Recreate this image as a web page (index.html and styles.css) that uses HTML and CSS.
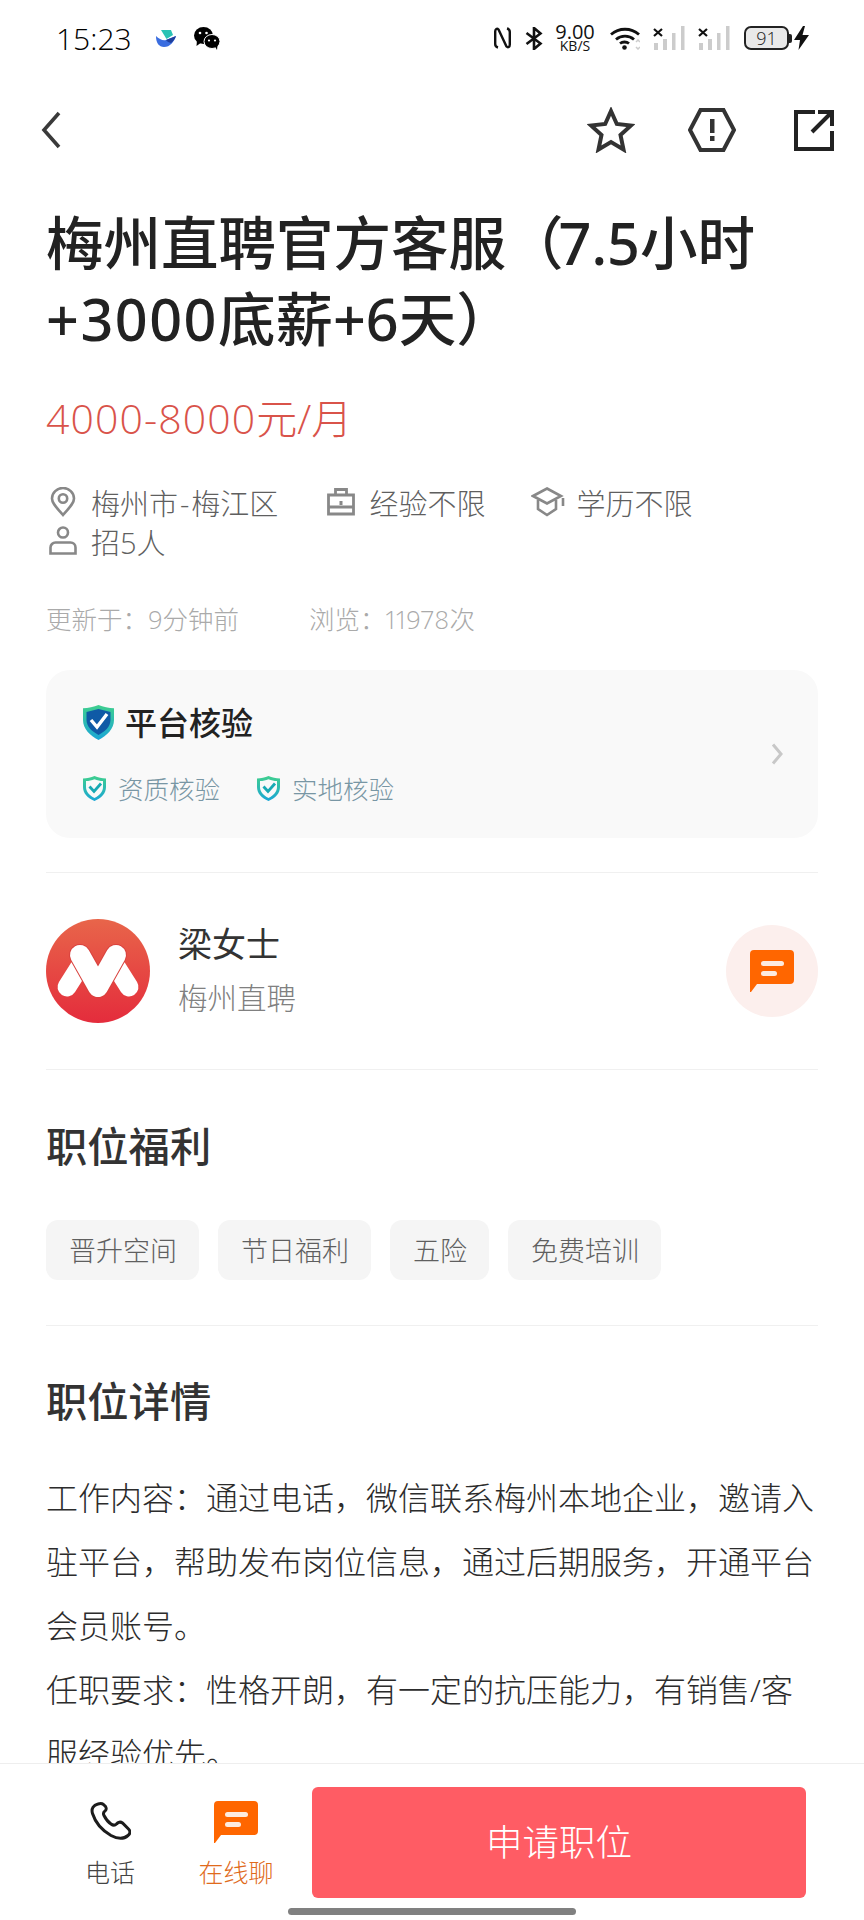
FILE: index.html
```html
<!DOCTYPE html>
<html lang="zh-CN">
  <head>
    <meta charset="UTF-8" />
    <meta name="viewport" content="width=device-width, initial-scale=1.0" />
    <title>职位详情</title>
    <link rel="stylesheet" href="styles.css">
  </head>
  <body>
    <svg class="sprite" aria-hidden="true">
      <defs>
        <linearGradient id="shield-edge" x1="0" y1="0" x2="0" y2="1">
          <stop offset="0" stop-color="#3fcf8e" />
          <stop offset="1" stop-color="#1aa6d6" />
        </linearGradient>
        <linearGradient id="avatar-bg" x1="0" y1="0" x2="0" y2="1">
          <stop offset="0" stop-color="#e8654a" />
          <stop offset="1" stop-color="#e42c3c" />
        </linearGradient>
        <symbol id="chat" viewBox="0 0 44 42">
          <path d="M4 0H40a4 4 0 0 1 4 4V30a4 4 0 0 1-4 4H7L1 42H0V4a4 4 0 0 1 4-4Z" fill="#ff6600" />
          <rect x="11" y="11" width="23" height="5" rx="2.500" fill="#fdebe0" />
          <rect x="11" y="21" width="16" height="5" rx="2.500" fill="#fdebe0" />
        </symbol>
        <symbol id="mini-shield" viewBox="0 0 23 25">
          <path d="M11.5 0C15 1.6 19 2.4 23 2.4V11c0 6.5-4.500 11-11.500 14C4.500 22 0 17.500 0 11V2.400C4 2.400 8 1.600 11.500 0Z" fill="url(#shield-edge)" />
          <path d="M11.500 3.200C14.200 4.300 17.200 5 20 5.100V11c0 4.800-3.200 8.300-8.500 10.900C6.200 19.300 3 15.800 3 11V5.100C5.800 5 8.800 4.300 11.500 3.200Z" fill="#f9f9f9" />
          <path d="M6.500 10.500 11 15.500 18 7.500" fill="none" stroke="#17a9b4" stroke-width="2.800" />
        </symbol>
      </defs>
    </svg>

    <div class="screen">
      <header class="status-bar">
        <span class="clock">15:23</span>
        <svg class="app-icon" viewBox="0 0 20 17">
          <path d="M5 0H15L17 5 10.500 9Z" fill="#2ac2b4" />
          <path d="M0 6C3 9 7 11 10 10L20 6C18 12 14 17 8 17 3 17 0 13 0 6Z" fill="#3a6de0" />
          <path d="M10 10 20 6C19 9 17 11.500 15 13 13 12.500 11 11.500 10 10Z" fill="#1f3f9c" />
        </svg>
        <svg class="wechat-icon" viewBox="0 0 26 23">
          <ellipse cx="9.500" cy="8.500" rx="9.500" ry="8.500" fill="#000" />
          <path d="M3 13 2.500 19 8 15Z" fill="#000" />
          <ellipse cx="18" cy="14.500" rx="8" ry="7" fill="#000" stroke="#fff" stroke-width="1" />
          <path d="M21 19.500 23 23 23.500 18Z" fill="#000" />
          <circle cx="6" cy="6" r="1.300" fill="#fff" />
          <circle cx="12.500" cy="6" r="1.300" fill="#fff" />
          <circle cx="15" cy="13.500" r="1.100" fill="#fff" />
          <circle cx="21" cy="13.500" r="1.100" fill="#fff" />
        </svg>
        <span class="status-spacer"></span>
        <svg class="nfc-icon" viewBox="0 0 17 22">
          <path d="M4 20.500C2 20 1.200 19 1.200 17V4.500C1.200 2 3 1 4.500 2.500L12.500 19.500C14 21 15.800 20 15.800 17.500V5C15.800 3 15 2 13 1.500" fill="none" stroke="#111" stroke-width="2.400" />
        </svg>
        <svg class="bt-icon" viewBox="0 0 18 23">
          <path d="M1.500 6 15.500 16.500 9 22V1L15.500 6.500 1.500 17" fill="none" stroke="#111" stroke-width="2.600" />
        </svg>
        <span class="net-speed"><b>9.00</b><i>KB/S</i></span>
        <svg class="wifi-icon" viewBox="0 0 30 23">
          <path d="M1 7.500C9 .5 21 .5 29 7.500" fill="none" stroke="#111" stroke-width="2.800" />
          <path d="M6 12.500C11 8 19 8 24 12.500" fill="none" stroke="#111" stroke-width="2.800" />
          <path d="M10 16.500C12.500 14.500 16.500 14.500 19 16.500" fill="none" stroke="#111" stroke-width="2.800" />
          <circle cx="14.500" cy="20.500" r="2.300" fill="#111" />
          <path d="M26 15 28 13 30 15M26 20 28 22 30 20" fill="none" stroke="#ccc" stroke-width="1.500" />
        </svg>
        <svg class="signal-icon" viewBox="0 0 32 24">
          <path d="M1 3 9 10M9 3 1 10" stroke="#111" stroke-width="2.200" />
          <rect x="1" y="17" width="4" height="7" fill="#ccc" />
          <rect x="10" y="13" width="4" height="11" fill="#ccc" />
          <rect x="19" y="7" width="3.500" height="17" fill="#ccc" />
          <rect x="28" y="0" width="3.500" height="24" fill="#ccc" />
        </svg>
        <svg class="signal-icon" viewBox="0 0 32 24">
          <path d="M1 3 9 10M9 3 1 10" stroke="#111" stroke-width="2.200" />
          <rect x="1" y="17" width="4" height="7" fill="#ccc" />
          <rect x="10" y="13" width="4" height="11" fill="#ccc" />
          <rect x="19" y="7" width="3.500" height="17" fill="#ccc" />
          <rect x="28" y="0" width="3.500" height="24" fill="#ccc" />
        </svg>
        <span class="battery"><span class="battery-body">91</span><span class="battery-nub"></span></span>
        <svg class="bolt-icon" viewBox="0 0 15 24">
          <path d="M9 0 0 14H6L4.500 24 15 9H8.500L11 0Z" fill="#111" />
        </svg>
      </header>

      <nav class="nav-bar">
        <svg class="nav-back" viewBox="0 0 20 38">
          <path d="M18 2 3 19 18 36" fill="none" stroke="#3a3a3a" stroke-width="3.600" />
        </svg>
        <span class="nav-actions">
          <svg class="nav-star" viewBox="0 0 48 46">
            <path d="M24 4 29.800 17 44 18.500 33.500 28 36.500 42.500 24 35 11.500 42.500 14.500 28 4 18.500 18.200 17Z" fill="none" stroke="#333" stroke-width="4" />
          </svg>
          <svg class="nav-report" viewBox="0 0 48 44">
            <path d="M12.500 2H35.500L46 22 35.500 42H12.500L2 22Z" fill="none" stroke="#333" stroke-width="4" />
            <rect x="22" y="11" width="4.500" height="14" fill="#333" />
            <rect x="22" y="28" width="4.500" height="5" fill="#333" />
          </svg>
          <svg class="nav-share" viewBox="0 0 40 41">
            <path d="M21 2H2V39H38V21" fill="none" stroke="#222" stroke-width="4" />
            <path d="M24 2H38V16M38 2 18 22" fill="none" stroke="#222" stroke-width="4" />
          </svg>
        </span>
      </nav>

      <main class="content">
        <h1 class="job-title">梅州直聘官方客服（<span class="num num--tight">7.5</span>小时<span class="num num--wide">+3000</span>底薪<span class="num">+6</span>天）</h1>
        <p class="salary"><span class="num">4000-8000</span>元/月</p>

        <ul class="meta-list">
          <li class="meta-item">
            <svg class="meta-icon" viewBox="0 0 28 30">
              <path d="M14 28C8 21 3 16.500 3 11.500A11 10.500 0 0 1 25 11.500C25 16.500 20 21 14 28Z" fill="none" stroke="#888" stroke-width="2.600" />
              <circle cx="14" cy="11.500" r="4.200" fill="none" stroke="#888" stroke-width="2.600" />
            </svg>
            <span>梅州市<span class="dash">-</span>梅江区</span>
          </li>
          <li class="meta-item">
            <svg class="meta-icon" viewBox="0 0 28 30">
              <path d="M1.500 8H26.500V27H1.500ZM1.500 20H26.500M8.500 8V2.500H19.500V8" fill="none" stroke="#888" stroke-width="2.800" />
              <rect x="12.500" y="14" width="3" height="4" fill="#888" />
            </svg>
            经验不限
          </li>
          <li class="meta-item meta-item--wide">
            <svg class="meta-icon" viewBox="0 0 34 30">
              <path d="M16 1.500 30 9 16 16.500 2 9Z" fill="none" stroke="#888" stroke-width="2.600" />
              <path d="M7 13V22L16 28 25 22V13" fill="none" stroke="#888" stroke-width="2.600" />
              <path d="M32 11V19" stroke="#888" stroke-width="2.600" />
            </svg>
            学历不限
          </li>
          <li class="meta-item">
            <svg class="meta-icon" viewBox="0 0 28 30">
              <circle cx="14" cy="6.500" r="5" fill="none" stroke="#888" stroke-width="2.600" />
              <path d="M6.500 16.500H21.500A5 5 0 0 1 26.500 21.500V27.500H1.500V21.500A5 5 0 0 1 6.500 16.500Z" fill="none" stroke="#888" stroke-width="2.600" />
            </svg>
            招5人
          </li>
        </ul>

        <p class="job-stats"><span>更新于：9分钟前</span><span>浏览：<span class="views">11978</span>次</span></p>

        <section class="verify-card">
          <div class="verify-main">
            <h3 class="verify-title">
              <svg class="verify-shield" viewBox="0 0 31 35">
                <path d="M15.500 0C20 2 26 3.200 31 3.200V15C31 24 24 30.500 15.500 35 7 30.500 0 24 0 15V3.200C5 3.200 11 2 15.500 0Z" fill="url(#shield-edge)" />
                <path d="M15.500 4 27.500 7V15C27.500 21.500 22 26.500 15.500 30 9 26.500 3.500 21.500 3.500 15V7Z" fill="#0f5aa6" />
                <path d="M8 15 14 22 24 9" fill="none" stroke="#fff" stroke-width="3.400" />
              </svg>
              平台核验
            </h3>
            <div class="verify-tags">
              <span class="verify-tag"><svg class="verify-tag-icon"><use href="#mini-shield" /></svg>资质核验</span>
              <span class="verify-tag"><svg class="verify-tag-icon"><use href="#mini-shield" /></svg>实地核验</span>
            </div>
          </div>
          <svg class="verify-arrow" viewBox="0 0 12 22">
            <path d="M2 1.500 10 11 2 20.500" fill="none" stroke="#c8c8c8" stroke-width="3" />
          </svg>
        </section>

        <section class="contact">
          <svg class="avatar" viewBox="0 0 104 104">
            <circle cx="52" cy="52" r="52" fill="url(#avatar-bg)" />
            <path d="M21 68 33 49M83 68 71 49" stroke="#fff" stroke-width="19" stroke-linecap="round" />
            <path d="M34 36 52 68M70 36 52 68" stroke="#d9423e" stroke-width="22" stroke-linecap="round" />
            <path d="M34 36 52 68M70 36 52 68" stroke="#fff" stroke-width="20" stroke-linecap="round" />
          </svg>
          <div class="contact-info">
            <div class="contact-name">梁女士</div>
            <div class="contact-company">梅州直聘</div>
          </div>
          <span class="contact-chat"><svg class="contact-chat-icon"><use href="#chat" /></svg></span>
        </section>

        <section class="welfare">
          <h2 class="section-title">职位福利</h2>
          <div class="tag-row">
            <span class="tag">晋升空间</span>
            <span class="tag">节日福利</span>
            <span class="tag">五险</span>
            <span class="tag">免费培训</span>
          </div>
        </section>

        <section class="details">
          <h2 class="section-title">职位详情</h2>
          <p class="details-text">工作内容：通过电话，微信联系梅州本地企业，邀请入驻平台，帮助发布岗位信息，通过后期服务，开通平台会员账号。<br>任职要求：性格开朗，有一定的抗压能力，有销售/客服经验优先。</p>
        </section>
      </main>

      <footer class="action-bar">
        <div class="action-link action-link--phone">
          <svg class="action-phone" viewBox="0 0 41 38">
            <path d="M8 2C3.500 3 1 6.500 2.500 11.500 5 19.500 11.500 28 21 33.500 27.500 37 34 37 38 33.500 40.500 31.500 40.500 29 38.500 27L32.500 21C30.500 19.500 28 20 26.500 22 25 23.500 23 23.500 21 22 18 20 15.500 16.500 14 13.500 13 11.500 13.500 10 15 9 16.500 8 16.500 6 15.500 4.500L13.500 2.500C12 1.300 10 1.300 8 2Z" fill="none" stroke="#1c1c1c" stroke-width="3" />
          </svg>
          <span>电话</span>
        </div>
        <div class="action-link action-link--chat">
          <svg class="action-chat"><use href="#chat" /></svg>
          <span>在线聊</span>
        </div>
        <button class="apply-button" type="button">申请职位</button>
        <span class="home-indicator"></span>
      </footer>
    </div>
  </body>
</html>
```

FILE: styles.css
```css
* {
  box-sizing: border-box;
}

html,
body {
  margin: 0;
  padding: 0;
}

body {
  background: #fff;
  color: #222;
  font-family: "Open Sans", "Noto Sans CJK SC", sans-serif;
  font-weight: 300;
}

h1,
h2,
h3,
p,
ul {
  margin: 0;
  padding: 0;
}

.sprite {
  position: absolute;
  width: 0;
  height: 0;
}

.screen {
  display: flex;
  flex-direction: column;
  width: 864px;
  height: 1920px;
  overflow: hidden;
}

/* status bar */
.status-bar {
  display: flex;
  align-items: center;
  flex: none;
  height: 76px;
  padding: 0 55px 0 56px;
}

.clock {
  width: 73px;
  font-size: 30px;
  color: #000;
}

.app-icon {
  width: 20px;
  height: 17px;
  margin-left: 27px;
}

.wechat-icon {
  width: 26px;
  height: 23px;
  margin-left: 18px;
}

.status-spacer {
  flex: 1;
}

.nfc-icon {
  width: 17px;
  height: 22px;
}

.bt-icon {
  width: 18px;
  height: 23px;
  margin-left: 14px;
}

.net-speed {
  display: flex;
  flex-direction: column;
  align-items: center;
  width: 42px;
  margin-left: 11px;
  color: #111;
}

.net-speed b {
  font-size: 20px;
  font-weight: 500;
  line-height: 15px;
}

.net-speed i {
  font-size: 14px;
  font-style: normal;
  font-weight: 500;
  line-height: 14px;
}

.wifi-icon {
  width: 30px;
  height: 23px;
  margin-left: 14px;
}

.signal-icon {
  width: 32px;
  height: 24px;
  margin-left: 13px;
}

.battery {
  display: flex;
  align-items: center;
  margin-left: 14px;
}

.battery-body {
  width: 45px;
  height: 24px;
  border: 2px solid #222;
  border-radius: 7px;
  background: #e9e9e9;
  font-size: 18px;
  line-height: 20px;
  text-align: center;
  color: #222;
}

.battery-nub {
  width: 3px;
  height: 9px;
  background: #222;
  border-radius: 0 2px 2px 0;
}

.bolt-icon {
  width: 15px;
  height: 24px;
  margin-left: 2px;
}

/* top navigation */
.nav-bar {
  display: flex;
  align-items: center;
  justify-content: space-between;
  flex: none;
  height: 108px;
  padding: 0 30px 0 41px;
}

.nav-back {
  width: 20px;
  height: 38px;
}

.nav-actions {
  display: flex;
  align-items: center;
}

.nav-star {
  width: 48px;
  height: 46px;
}

.nav-report {
  width: 48px;
  height: 44px;
  margin-left: 53px;
}

.nav-share {
  width: 40px;
  height: 41px;
  margin-left: 58px;
}

/* scrolling content */
.content {
  flex: 1;
  min-height: 0;
  overflow: hidden;
  padding: 21px 46px 0;
}

.job-title {
  font-size: 57.5px;
  font-weight: 500;
  line-height: 76px;
  color: #222;
}

.job-title .num {
  font-family: "Noto Sans", "Open Sans", sans-serif;
}

.job-title .num--wide {
  letter-spacing: 1.5px;
}

/* the full-width bracket leaves too much room before the figure */
.job-title .num--tight {
  margin-left: -5px;
}

.salary {
  margin-top: 31px;
  font-size: 41px;
  line-height: 60px;
  color: #d9534a;
}

.salary .num {
  letter-spacing: 1.1px;
}

.meta-list {
  display: flex;
  flex-wrap: wrap;
  column-gap: 46px;
  margin-top: 34px;
  list-style: none;
}

.meta-item {
  display: flex;
  align-items: center;
  gap: 14px;
  height: 39px;
  padding-left: 3px;
  font-size: 29px;
  color: #5f5f5f;
}

.dash {
  margin: 0 2px;
}

.meta-icon {
  flex: none;
  width: 28px;
  height: 30px;
}

.meta-item--wide {
  gap: 11px;
  padding-left: 0;
}

.meta-item--wide .meta-icon {
  width: 34px;
}

.job-stats {
  display: flex;
  gap: 70px;
  margin-top: 41px;
  font-size: 25.5px;
  line-height: 36px;
  color: #aaa;
}

.views {
  font-variant-numeric: proportional-nums;
  letter-spacing: 0.4px;
}

.verify-card {
  display: flex;
  align-items: center;
  justify-content: space-between;
  height: 168px;
  margin-top: 33px;
  padding: 0 35px 0 37px;
  border-radius: 24px;
  background: #f9f9f9;
}

.verify-main {
  padding-top: 1px;
}

.verify-title {
  display: flex;
  align-items: center;
  gap: 11px;
  font-size: 32px;
  font-weight: 500;
  line-height: 40px;
  color: #222;
}

.verify-shield {
  width: 31px;
  height: 35px;
}

.verify-tags {
  display: flex;
  gap: 37px;
  margin-top: 28px;
}

.verify-tag {
  display: flex;
  align-items: center;
  gap: 12px;
  font-size: 25.5px;
  line-height: 36px;
  color: #7896a4;
}

.verify-tag-icon {
  width: 23px;
  height: 25px;
}

.verify-arrow {
  width: 12px;
  height: 22px;
}

.contact {
  display: flex;
  align-items: center;
  margin-top: 34px;
  padding: 46px 0 46px;
  border-top: 1px solid #f0f0f0;
  border-bottom: 1px solid #f0f0f0;
}

.avatar {
  flex: none;
  width: 104px;
  height: 104px;
}

.contact-info {
  flex: 1;
  margin-left: 28px;
  padding-bottom: 2px;
}

.contact-name {
  font-size: 34px;
  font-weight: 400;
  line-height: 48px;
  color: #333;
}

.contact-company {
  margin-top: 7px;
  font-size: 29.5px;
  line-height: 46px;
  color: #808080;
}

.contact-chat {
  display: flex;
  align-items: center;
  justify-content: center;
  width: 92px;
  height: 92px;
  border-radius: 50%;
  background: #fcefed;
}

.contact-chat-icon {
  width: 44px;
  height: 42px;
}

.section-title {
  font-size: 41.3px;
  font-weight: 500;
  line-height: 56px;
  color: #333;
}

.welfare {
  padding: 48px 0 45px;
  border-bottom: 1px solid #f0f0f0;
}

.tag-row {
  display: flex;
  gap: 19px;
  margin-top: 46px;
}

.tag {
  display: flex;
  align-items: center;
  height: 60px;
  padding: 0 22px 2px 23px;
  border-radius: 12px;
  background: #f5f5f5;
  font-size: 27px;
  color: #5f5f5f;
}

.details {
  padding-top: 47px;
}

.details-text {
  margin-top: 37px;
  font-size: 32px;
  line-height: 64px;
  color: #2c2c2c;
}

/* bottom actions */
.action-bar {
  position: relative;
  display: flex;
  flex: none;
  height: 157px;
  padding: 23px 58px 0 0;
  border-top: 1px solid #eee;
  background: #fff;
}

.action-link {
  display: flex;
  flex-direction: column;
  align-items: center;
  font-size: 25px;
  line-height: 36px;
  white-space: nowrap;
}

.action-link--phone {
  width: 50px;
  margin-left: 85px;
  color: #444;
}

.action-link--chat {
  width: 76px;
  margin-left: 63px;
  color: #e06a1b;
}

.action-phone {
  width: 41px;
  height: 38px;
  margin: 15px 0 14px;
}

.action-chat {
  width: 44px;
  height: 42px;
  margin: 14px 0 11px;
}

.apply-button {
  flex: none;
  width: 494px;
  height: 111px;
  margin-left: 38px;
  padding: 0 0 4px;
  border: 0;
  border-radius: 6px;
  background: #ff5c64;
  font-family: inherit;
  font-size: 36.5px;
  font-weight: 300;
  color: #fff;
}

/* gesture bar pinned over the bottom edge */
.home-indicator {
  position: absolute;
  left: 288px;
  bottom: 5px;
  width: 288px;
  height: 7px;
  border-radius: 4px;
  background: #808080;
}
```
